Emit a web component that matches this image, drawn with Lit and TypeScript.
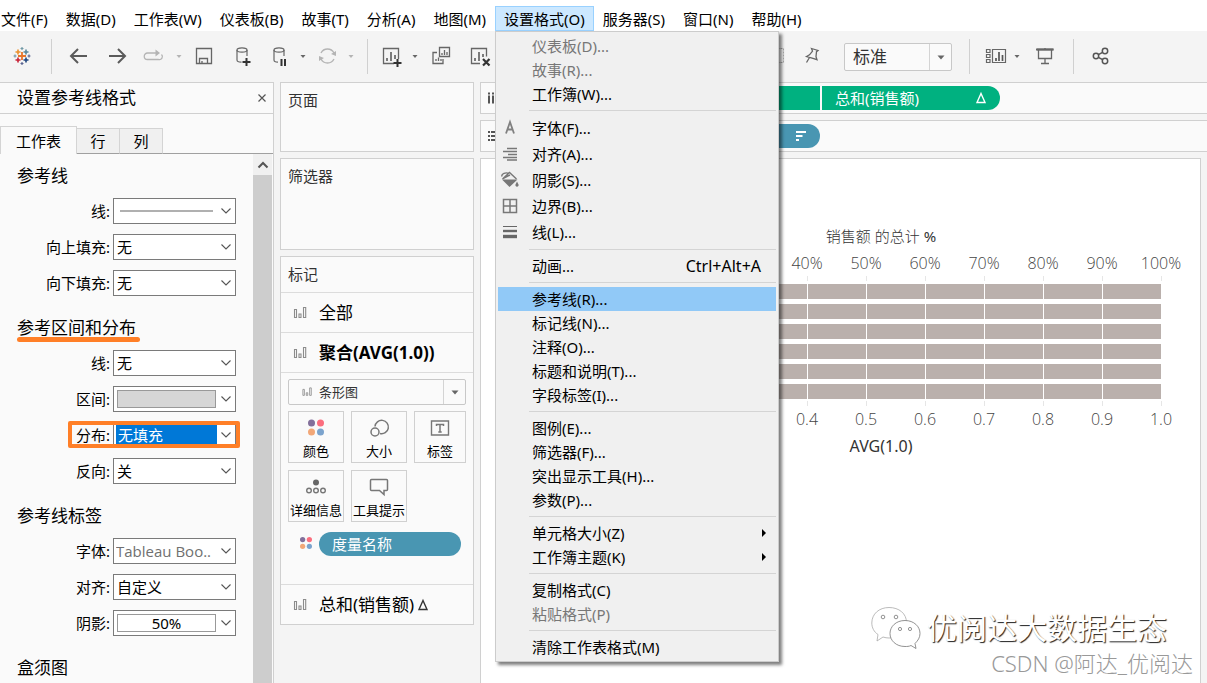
import { LitElement, html, css, svg, nothing } from "lit";
import { customElement, property } from "lit/decorators.js";

const ICONS: Record<string, unknown> = {
  logo: svg`<g fill="none" stroke-width="1.6">
    <path stroke="#e8762c" stroke-width="1.800" d="M12 8v8M8 12h8"/>
    <path stroke="#c72035" d="M8 13.5v5M5.500 16h5"/>
    <path stroke="#59879b" d="M16 5.500v5M13.500 8h5"/>
    <path stroke="#eb912c" d="M8 5.500v5M5.500 8h5"/>
    <path stroke="#1f457e" d="M16 13.500v5M13.500 16h5"/>
    <path stroke="#7199a6" stroke-width="1.200" d="M12 3v3M10.500 4.500h3M3.500 12h3M5 10.500v3"/>
    <path stroke="#5b6591" stroke-width="1.200" d="M17.500 12h3M19 10.500v3M12 18v3M10.500 19.500h3"/></g>`,
  back: svg`<path fill="none" stroke="#5a5a5a" stroke-width="2" d="M20 12H4.500M11 5l-7 7 7 7"/>`,
  forward: svg`<path fill="none" stroke="#5a5a5a" stroke-width="2" d="M4 12h15.500M13 5l7 7-7 7"/>`,
  loop: svg`<g fill="none" stroke="#b4b4b4" stroke-width="1.300"><path d="M17 9H6.500a3 3 0 0 0 0 6.500h11a3 3 0 0 0 3-5"/></g><path fill="#b4b4b4" d="M14.500 5.500l4.500 3.500-4.500 3.500z"/>`,
  save: svg`<g fill="none" stroke="#666" stroke-width="1.300"><path d="M3.500 4.500h15v15h-15z"/><path d="M6.500 19.500v-5h8v5M9 19.500v-2.500"/></g>`,
  dbadd: svg`<g fill="none" stroke="#666" stroke-width="1.200"><ellipse cx="11" cy="6" rx="5" ry="2.200"/><path d="M6 6v10c0 1.500 2 2.200 4.500 2.200M16 6v6"/></g><path stroke="#333" stroke-width="2" d="M15.500 14v8M11.500 18h8"/>`,
  dbpause: svg`<g fill="none" stroke="#666" stroke-width="1.200"><ellipse cx="12" cy="6" rx="5" ry="2.200"/><path d="M7 6v10c0 1.500 1.500 2.200 4 2.200M17 6v6"/></g><path stroke="#333" stroke-width="2" d="M14.500 15v7M18 15v7"/>`,
  refresh: svg`<g fill="none" stroke="#b4b4b4" stroke-width="1.300"><path d="M6 9a7.300 7.300 0 0 1 13 0M19 15a7.300 7.300 0 0 1-13 0"/></g><path fill="#b4b4b4" d="M21 7v5l-5-2zM4 17v-5l5 2z"/>`,
  chartadd: svg`<g fill="none" stroke="#666" stroke-width="1.300"><path d="M15 19.500H4.500v-15h15V15"/></g><path stroke="#666" stroke-width="1.700" d="M8 17v-3M12 17V8M16 15v-4"/><path stroke="#333" stroke-width="2" d="M18.500 15v8M14.500 19h8"/>`,
  dup: svg`<g fill="none" stroke="#666" stroke-width="1.300"><path d="M10.500 3.500h10v9h-10zM8 8.500H4v11h10v-4.500"/></g><path stroke="#666" stroke-width="1.300" d="M13 11V9M15.500 11V6M18 11V8M7 17v-2M9.500 17v-3.500M12 17v-2"/>`,
  chartx: svg`<g fill="none" stroke="#666" stroke-width="1.300"><path d="M13 19.500H4.500v-15h15v8"/></g><path stroke="#666" stroke-width="1.700" d="M8 17v-3M12 17V8M16 13v-3"/><path stroke="#333" stroke-width="2.200" d="M16 15l6.500 6.500M22.500 15L16 21.500"/>`,
  dashed: svg`<path fill="none" stroke="#aaa" stroke-dasharray="2 1" d="M4.500 4.500h15v14h-15z"/>`,
  pin: svg`<path fill="none" stroke="#666" stroke-width="1.300" d="M11.500 4.500l6.500 2-1.500 1.200-.5 5 1 3-4-1.300-3.500-.900-3-1 3-1.700 3-3.700zM9.500 13.500l-3 5"/>`,
  showme: svg`<g fill="none" stroke="#666" stroke-width="1.200"><path d="M11.500 5.500h13v13h-13zM5.500 5.500h3.500v3H5.500zM5.500 10.500h3.500v3H5.500zM5.500 15.500h3.500v3H5.500z"/></g><path stroke="#555" stroke-width="1.700" d="M15 17v-3M18 17V8M21.500 17v-6"/>`,
  present: svg`<g fill="none" stroke="#666" stroke-width="1.300"><path d="M3 5.500h17.500M5.500 5.500v9h13v-9M12 4v1.500M12 14.500v5M8 19.500h8"/></g><path stroke="#666" stroke-width="2.200" d="M3.500 5.500h17"/>`,
  share: svg`<g fill="none" stroke="#555" stroke-width="1.500"><circle cx="7" cy="12" r="2.700"/><circle cx="16" cy="7" r="2.700"/><circle cx="16" cy="17" r="2.700"/><path d="M9.400 10.700l4.200-2.400M9.400 13.300l4.200 2.400"/></g>`,
  bars: svg`<g fill="none" stroke="#8c8c8c" stroke-width="1.100"><path d="M6.500 8.500h2v8h-2zM11 13h2v3.500h-2zM15.500 6.500h2.200v10h-2.200z"/></g>`,
  dots: svg`<circle cx="7.500" cy="6" r="3.500" fill="#83709b"/><circle cx="16.500" cy="6" r="3.500" fill="#fb6e7e"/><circle cx="7.500" cy="15" r="3.500" fill="#f2a778"/><circle cx="16.500" cy="15" r="3.500" fill="#7ba3cd"/>`,
  size: svg`<g fill="none" stroke="#777" stroke-width="1.500"><path d="M8 9.500a6.700 6.700 0 1 1 5 7"/><circle cx="8" cy="15" r="4"/></g>`,
  label: svg`<path fill="none" stroke="#777" stroke-width="1.400" d="M3.500 4h17v14h-17z"/><path fill="none" stroke="#777" stroke-width="1.500" d="M8.500 9V7.500h7V9M12 7.500v7.500M10.300 15h3.400"/>`,
  detail: svg`<circle cx="12" cy="6.500" r="3" fill="#666"/><g fill="none" stroke="#777" stroke-width="1.400"><circle cx="5" cy="14.500" r="2.300"/><circle cx="12" cy="14.500" r="2.300"/><circle cx="19" cy="14.500" r="2.300"/></g>`,
  tooltip: svg`<path fill="none" stroke="#777" stroke-width="1.500" d="M4.500 3.500h15a1 1 0 0 1 1 1v9a1 1 0 0 1-1 1H17v4l-4.500-4h-8a1 1 0 0 1-1-1v-9a1 1 0 0 1 1-1z"/>`,
  delta: svg`<path fill="none" stroke="currentColor" stroke-width="1.400" d="M12 7.500l4 9H8z"/>`,
  sort: svg`<path stroke="#fff" stroke-width="2" d="M7 8h10M7 12h6.500M7 16h3"/>`,
  cols: svg`<path stroke="#555" stroke-width="2" stroke-dasharray="2 1 9 0" d="M8 6.500v11M12 6.500v11M16 6.500v11"/>`,
  rows: svg`<path stroke="#555" stroke-width="2" stroke-dasharray="2 1 9 0" d="M7 8h11M7 12h11M7 16h11"/>`,
  font: svg`<path fill="none" stroke="#808080" stroke-width="1.800" d="M8 17.500l4-11.500 4 11.500M9.500 13.500h5"/>`,
  align: svg`<path stroke="#777" stroke-width="1.400" d="M9 6.500h10M5 9.500h14M10 12.500h9M5 15.500h14M9 18h10"/>`,
  bucket: svg`<path fill="none" stroke="#777" stroke-width="1.400" d="M4.500 11l7-6.500 7 6.500M4 8.500c-1-3 4-4.500 7-3M5 10.500l7-3.500"/><path fill="#777" d="M4 11.500h15.500L11.500 19zM19 13.500l1.500 3a1.600 1.600 0 1 1-3 0z"/>`,
  border: svg`<path fill="none" stroke="#777" stroke-width="1.500" d="M5.500 5.500h13v13h-13zM12 5.500v13M5.500 12h13"/>`,
  lines: svg`<path stroke="#666" d="M5 6.500h14"/><path stroke="#666" stroke-width="2.400" d="M5 11h14"/><path stroke="#666" stroke-width="3.400" d="M5 16.500h14"/>`,
  chevron: svg`<path fill="none" stroke="#555" stroke-width="1.100" d="M7.500 9.500l4.500 4.500 4.500-4.500"/>`,
  up: svg`<path fill="none" stroke="#555" stroke-width="2" d="M7.500 14.500l4.500-4.500 4.500 4.500"/>`,
  caret: svg`<path fill="#666" d="M8.500 10.500h7l-3.500 4z"/>`,
  smallcaret: svg`<path fill="currentColor" d="M9.500 11h5L12 14z"/>`,
  close: svg`<path stroke="#555" stroke-width="1.200" d="M9.500 8.500l7 7M16.500 8.500l-7 7"/>`,
  submenu: svg`<path fill="#000" d="M10 8l4 4-4 4z"/>`,
};

const icon = (name: string, cls = "icon") =>
  html`<svg class=${cls} viewBox="0 0 24 24" aria-hidden="true">${ICONS[name]}</svg>`;

const base = css`
  * { box-sizing: border-box; }
  button, select, input { font: inherit; color: inherit; margin: 0; padding: 0; border: 0; background: none; border-radius: 0; }
  h1, h2, h3, p, ul { margin: 0; padding: 0; font: inherit; list-style: none; }
  .icon { display: block; width: 24px; height: 24px; flex: none; overflow: visible; }
  .small { display: block; width: 18px; height: 18px; flex: none; }
`;

interface Item { t: string; icon?: string; key?: string; off?: boolean; sub?: boolean; hot?: boolean; }

const FORMAT_MENU: Item[][] = [
  [{ t: "仪表板(D)...", off: true }, { t: "故事(R)...", off: true }, { t: "工作簿(W)..." }],
  [
    { t: "字体(F)...", icon: "font" }, { t: "对齐(A)...", icon: "align" }, { t: "阴影(S)...", icon: "bucket" },
    { t: "边界(B)...", icon: "border" }, { t: "线(L)...", icon: "lines" },
  ],
  [{ t: "动画...", key: "Ctrl+Alt+A" }],
  [{ t: "参考线(R)...", hot: true }, { t: "标记线(N)..." }, { t: "注释(O)..." }, { t: "标题和说明(T)..." }, { t: "字段标签(I)..." }],
  [{ t: "图例(E)..." }, { t: "筛选器(F)..." }, { t: "突出显示工具(H)..." }, { t: "参数(P)..." }],
  [{ t: "单元格大小(Z)", sub: true }, { t: "工作簿主题(K)", sub: true }],
  [{ t: "复制格式(C)" }, { t: "粘贴格式(P)", off: true }],
  [{ t: "清除工作表格式(M)" }],
];

@customElement("menu-bar")
class MenuBar extends LitElement {
  static styles = [base, css`
    :host { display: block; background: #fff; }
    .bar { display: flex; height: 31px; padding: 6px 0 0 1px; gap: 18px; }
    .entry { position: relative; }
    .top { display: block; height: 25px; line-height: 26px; white-space: nowrap; }
    .open { margin: 0 -9px; }
    .open > .top { padding: 0 8px; border: 1px solid #99d1ff; line-height: 24px; background: #cce8ff; }
    .menu { position: absolute; z-index: 5; top: 100%; left: 0; width: 284px; padding: 2px; border: 1px solid #ccc; background: #f0f0f0; box-shadow: 3px 3px 3px rgba(0, 0, 0, 0.5); }
    .group + .group { border-top: 1px solid transparent; padding-top: 4px; margin-top: 4px; position: relative; }
    .group + .group::before { content: ""; position: absolute; top: -1px; left: 31px; right: 0; height: 1px; background: #d4d4d4; }
    .item { display: flex; align-items: center; width: 100%; height: 24px; text-align: left; white-space: nowrap; }
    .tall .item { height: 26px; }
    .slot { width: 24px; margin-right: 10px; flex: none; }
    .text { flex: 1; }
    .key { padding-right: 15px; font-size: 16px; }
    .off { color: #777; }
    .hot { background: #91c9f7; }
  `];

  private menu() {
    return html`<div class="menu" role="menu">
      ${FORMAT_MENU.map((g) => html`<div class="group ${g[0].icon ? "tall" : ""}">
        ${g.map((i) => html`<button role="menuitem" class="item ${i.off ? "off" : ""} ${i.hot ? "hot" : ""}" ?disabled=${i.off}>
          <span class="slot">${i.icon ? icon(i.icon) : nothing}</span><span class="text">${i.t}</span>
          ${i.key ? html`<span class="key">${i.key}</span>` : nothing}
          ${i.sub ? icon("submenu") : nothing}
        </button>`)}
      </div>`)}
    </div>`;
  }

  render() {
    const tops = ["文件(F)", "数据(D)", "工作表(W)", "仪表板(B)", "故事(T)", "分析(A)", "地图(M)", "设置格式(O)", "服务器(S)", "窗口(N)", "帮助(H)"];
    return html`<nav class="bar">${tops.map((t) => t === "设置格式(O)"
      ? html`<div class="entry open"><button class="top">${t}</button>${this.menu()}</div>`
      : html`<div class="entry"><button class="top">${t}</button></div>`)}</nav>`;
  }
}

@customElement("tool-bar")
class ToolBar extends LitElement {
  static styles = [base, css`
    :host { display: block; background: #f4f4f4; overflow: hidden; }
    .bar { display: flex; align-items: center; height: 51px; padding-bottom: 1px; }
    .tool { display: flex; justify-content: center; align-items: center; flex: none; height: 32px; width: 36px; }
    .home { width: 43px; }
    .wide { width: 40px; }
    .slim { width: 32px; }
    .caret { width: 16px; color: #666; }
    .pale { color: #b4b4b4; }
    .sep { flex: none; width: 1px; height: 35px; margin: 0 7px 0 8px; background: #d0d0d0; }
    .covered { flex: none; width: 261px; }
    .fit { position: relative; flex: none; width: 108px; height: 28px; margin: 1px 9px 0 12px; border: 1px solid #c8c8c8; border-radius: 2px; background: #fafafa; }
    .fit select { width: 100%; height: 100%; padding-left: 8px; appearance: none; font-size: 17px; color: #333; }
    .arrow { position: absolute; top: 0; right: 0; width: 22px; height: 100%; border-left: 1px solid #d4d4d4; pointer-events: none; display: flex; align-items: center; justify-content: center; }
  `];

  private tool(name: string, cls: string, label: string) {
    return html`<button class="tool ${cls}" aria-label=${label}>${icon(name)}</button>`;
  }

  render() {
    const more = (cls = "") => this.tool("smallcaret", "caret " + cls, "更多");
    return html`<div class="bar">
      ${this.tool("logo", "home", "开始")}<span class="sep"></span>
      ${this.tool("back", "wide", "撤消")}${this.tool("forward", "", "重做")}${this.tool("loop", "", "重播")}${more("pale")}
      ${this.tool("save", "", "保存")}${this.tool("dbadd", "wide", "新建数据源")}${this.tool("dbpause", "slim", "暂停自动更新")}${more()}
      ${this.tool("refresh", "slim", "运行更新")}${more("pale")}<span class="sep"></span>
      ${this.tool("chartadd", "slim", "新建工作表")}${more()}${this.tool("dup", "", "复制")}${this.tool("chartx", "wide", "清除")}
      <span class="covered"></span>
      ${this.tool("dashed", "slim", "标签")}${this.tool("pin", "wide", "固定")}
      <span class="fit"><select aria-label="适合"><option>标准</option></select><span class="arrow">${icon("caret")}</span></span>
      <span class="sep"></span>
      ${this.tool("showme", "slim", "智能推荐")}${more()}${this.tool("present", "wide", "演示模式")}<span class="sep"></span>
      ${this.tool("share", "wide", "共享")}
    </div>`;
  }
}

interface Field { label: string; value: string; kind?: string; mark?: boolean; }
const SECTIONS: { title: string; under?: boolean; fields: Field[] }[] = [
  { title: "参考线", fields: [
    { label: "线:", value: "", kind: "stroke" }, { label: "向上填充:", value: "无" }, { label: "向下填充:", value: "无" }] },
  { title: "参考区间和分布", under: true, fields: [
    { label: "线:", value: "无" }, { label: "区间:", value: "", kind: "swatch" },
    { label: "分布:", value: "无填充", kind: "picked", mark: true }, { label: "反向:", value: "关" }] },
  { title: "参考线标签", fields: [
    { label: "字体:", value: "Tableau Boo..", kind: "faint" }, { label: "对齐:", value: "自定义" }, { label: "阴影:", value: "50%", kind: "boxed" }] },
  { title: "盒须图", fields: [] },
];

@customElement("format-pane")
class FormatPane extends LitElement {
  static styles = [base, css`
    :host { display: flex; flex-direction: column; min-height: 0; border: 1px solid #d0d0d0; border-width: 1px 1px 0 0; background: #fafafa; overflow: hidden; }
    .head { display: flex; align-items: center; justify-content: space-between; flex: none; height: 31px; padding-left: 17px; border-bottom: 1px solid #d0d0d0; font-size: 17px; line-height: 30px; }
    .tabs { display: flex; align-items: flex-end; flex: none; height: 40px; font-size: 15px; }
    .tab { width: 43px; height: 26px; border: 1px solid #d4d4d4; border-width: 1px 1px 1px 0; border-bottom-color: #a0a0a0; background: #f0f0f0; }
    .on { width: 77px; height: 28px; border-width: 1px 1px 0; background: #fafafa; }
    .rest { flex: 1; border-bottom: 1px solid #a0a0a0; }
    .body { display: flex; flex: 1; min-height: 0; }
    .form { flex: 1; min-width: 0; overflow: hidden; }
    .title { display: flex; height: 44px; padding: 10px 0 0 17px; line-height: 34px; font-size: 17px; }
    .first .title { height: 39px; padding-top: 5px; }
    .under { position: relative; }
    .under::after { content: ""; position: absolute; left: 0; top: 26px; width: 123px; height: 5px; border-radius: 3px; background: #ff7f27; }
    .row { display: flex; justify-content: flex-end; height: 36px; padding: 5px 17px 5px 0; }
    .pair { display: flex; align-items: center; gap: 3px; position: relative; }
    .mark::after { content: ""; position: absolute; top: -1px; bottom: 0; left: -8px; right: -4px; border: 4px solid #ff7f27; border-radius: 2px; pointer-events: none; }
    .box { position: relative; display: block; width: 123px; height: 26px; border: 1px solid #7a7a7a; background: #fff; }
    .box select { appearance: none; display: block; width: 100%; height: 100%; padding: 0 20px 0 3px; outline: 0; }
    .faint select { color: #707070; font-family: "Open Sans", sans-serif; padding-left: 2px; padding-right: 0; }
    .picked select { width: 101px; margin-left: 2px; padding: 0 0 0 2px; background: #0078d7; color: #fff; }
    .boxed select { width: 99px; height: 18px; margin: 3px; padding: 0; border: 1px solid #999; text-align: center; text-align-last: center; line-height: 16px; }
    .chev { position: absolute; top: 0; right: -3px; pointer-events: none; }
    .stroke { position: absolute; left: 6px; top: 11px; width: 93px; height: 2px; background: #b0b0b0; pointer-events: none; }
    .swatch { position: absolute; left: 3px; top: 3px; width: 99px; height: 18px; border: 1px solid #999; background: #d6d6d6; pointer-events: none; }
    .scroll { display: flex; flex-direction: column; flex: none; width: 20px; padding-right: 1px; }
    .up { display: flex; justify-content: center; align-items: center; height: 21px; background: #f0f0f0; }
    .thumb { flex: 1; background: #cdcdcd; }
  `];

  private field(f: Field, id: string) {
    const drawn = f.kind === "stroke" || f.kind === "swatch";
    return html`<div class="row"><div class="pair ${f.mark ? "mark" : ""}">
      <label for=${id}>${f.label}</label>
      <span class="box ${f.kind && !drawn ? f.kind : ""}">
        <select id=${id}><option>${f.value}</option></select>
        ${drawn ? html`<span class=${f.kind!}></span>` : nothing}
        ${icon("chevron", "icon chev")}
      </span></div></div>`;
  }

  render() {
    return html`
      <div class="head"><h2>设置参考线格式</h2><button aria-label="关闭">${icon("close")}</button></div>
      <div class="tabs" role="tablist"><button role="tab" class="tab on">工作表</button><button role="tab" class="tab">行</button><button role="tab" class="tab">列</button><span class="rest"></span></div>
      <div class="body">
        <div class="form">${SECTIONS.map((s, i) => html`<section class=${i === 0 ? "first" : ""}>
          <div class="title"><h3 class=${s.under ? "under" : ""}>${s.title}</h3></div>
          ${s.fields.map((f, j) => this.field(f, `f${i}-${j}`))}
        </section>`)}</div>
        <div class="scroll"><button class="up" aria-label="向上滚动">${icon("up")}</button><div class="thumb"></div></div>
      </div>`;
  }
}

@customElement("card-column")
class CardColumn extends LitElement {
  static styles = [base, css`
    :host { display: flex; flex-direction: column; gap: 6px; padding: 0 6px; background: #f4f4f4; }
    .card { border: 1px solid #d0d0d0; background: #fafafa; color: #333; }
    .name { height: 35px; padding-left: 7px; line-height: 34px; }
    .pages { height: 70px; }
    .filters { height: 92px; }
    .layer { display: flex; align-items: center; width: 100%; height: 40px; padding-left: 7px; gap: 7px; border-top: 1px solid #dcdcdc; font-size: 17px; color: #000; }
    .bold { font-weight: 700; }
    .inner { padding: 6px 7px 0; border-top: 1px solid #dcdcdc; height: 212px; }
    .type { position: relative; height: 26px; border: 1px solid #c8c8c8; border-radius: 2px; margin-bottom: 6px; }
    .type select { appearance: none; width: 100%; height: 100%; padding-left: 30px; font-size: 13px; }
    .lead { position: absolute; left: 9px; top: 3px; pointer-events: none; }
    .arrow { position: absolute; top: 0; right: 0; width: 22px; height: 100%; border-left: 1px solid #d4d4d4; display: flex; align-items: center; justify-content: center; pointer-events: none; }
    .grid { display: grid; grid-template-columns: 56fr 56fr 52fr; gap: 7px; }
    .prop { display: flex; flex-direction: column; align-items: center; height: 52px; padding-top: 5px; border: 1px solid #d0d0d0; font-size: 13px; line-height: 20px; white-space: nowrap; color: #000; }
    .chip { display: flex; align-items: center; gap: 4px; padding: 10px 5px 0 9px; }
    .pill { flex: 1; height: 24px; padding-left: 13px; border-radius: 12px; background: #4996b2; color: #fff; line-height: 23px; text-align: left; }
    .dlt { margin-left: -10px; color: #333; }
  `];

  render() {
    const props = [["dots", "颜色"], ["size", "大小"], ["label", "标签"], ["detail", "详细信息"], ["tooltip", "工具提示"]];
    return html`
      <section class="card pages"><h2 class="name">页面</h2></section>
      <section class="card filters"><h2 class="name">筛选器</h2></section>
      <section class="card">
        <h2 class="name">标记</h2>
        <button class="layer">${icon("bars")}全部</button>
        <button class="layer bold">${icon("bars")}聚合(AVG(1.0))</button>
        <div class="inner">
          <div class="type"><select aria-label="标记类型"><option>条形图</option></select>${icon("bars", "small lead")}<span class="arrow">${icon("caret")}</span></div>
          <div class="grid">${props.map(([i, t]) => html`<button class="prop">${icon(i)}<span>${t}</span></button>`)}</div>
          <div class="chip">${icon("dots", "small")}<button class="pill">度量名称</button></div>
        </div>
        <button class="layer">${icon("bars")}总和(销售额)${icon("delta", "icon dlt")}</button>
      </section>`;
  }
}

@customElement("field-shelf")
class FieldShelf extends LitElement {
  @property() kind = "cols";
  static styles = [base, css`
    :host { display: flex; align-items: center; height: 32px; border: 1px solid #d0d0d0; border-right: 0; background: #fafafa; }
    .name { display: flex; align-items: center; width: 161px; }
    .pills { display: flex; gap: 2px; }
    .pill { display: flex; align-items: center; justify-content: space-between; width: 178px; height: 24px; padding: 0 7px 0 13px; color: #fff; background: #00b180; white-space: nowrap; }
    .start { border-radius: 12px 0 0 12px; }
    .end { border-radius: 0 12px 12px 0; }
    .blue { border-radius: 12px; background: #4996b2; justify-content: flex-end; }
  `];
  render() {
    return this.kind === "cols"
      ? html`<span class="name">${icon("cols")}</span><div class="pills"><button class="pill start" aria-label="聚合"></button><button class="pill end">总和(销售额)${icon("delta")}</button></div>`
      : html`<span class="name">${icon("rows")}</span><div class="pills"><button class="pill blue" aria-label="排序">${icon("sort")}</button></div>`;
  }
}

@customElement("bar-view")
class BarView extends LitElement {
  static styles = [base, css`
    :host { display: block; position: relative; flex: 1; min-height: 0; margin-right: 6px; padding: 63px 9px 0 90px; border: 1px solid #d0d0d0; border-bottom: 0; background: #fff; }
    .caption { text-align: center; line-height: 28px; color: #333; }
    .large { font-size: 16px; }
    .light { font-weight: 300; }
    .plot { padding-right: 30px; }
    .axis { display: grid; grid-template-columns: repeat(11, 1fr); margin: 0 -5%; font: 300 16px/26px "Open Sans", "Noto Sans", sans-serif; color: #444; text-align: center; min-height: 26px; }
    .ticks { min-height: 0; }
    .ticks span { justify-self: center; width: 1px; height: 5px; background: #e6e6e6; }
    .rows { display: grid; gap: 5px; margin: 3px 0 2px; }
    .bar { display: grid; grid-template-columns: repeat(10, 1fr); height: 15px; background: #bab0ac; }
    .bar span { border-left: 1px solid #fff; }
    .brand { position: absolute; right: 33px; bottom: 33px; display: flex; align-items: center; gap: 6px; color: #fff; font-size: 30px; line-height: 44px; text-shadow: 1px 1px 1px #222; }
    .chat { width: 50px; height: 44px; }
    .credit { position: absolute; right: 7px; bottom: 5px; font-size: 22px; line-height: 30px; color: #999; font-weight: 300; }
  `];

  render() {
    const n = Array.from({ length: 11 }, (_, i) => i);
    const firstLabel = 4;
    const ticks = html`<div class="axis ticks">${n.map(() => html`<span></span>`)}</div>`;
    return html`
      <h2 class="caption"><span class="light">销售额 的总计</span> %</h2>
      <div class="plot">
        <div class="axis">${n.map((i) => html`<span>${i < firstLabel ? "" : `${i * 10}%`}</span>`)}</div>
        ${ticks}
        <div class="rows">${n.slice(0, 6).map(() => html`<div class="bar">${n.slice(0, 10).map(() => html`<span></span>`)}</div>`)}</div>
        ${ticks}
        <div class="axis">${n.map((i) => html`<span>${i < firstLabel ? "" : (i / 10).toFixed(1)}</span>`)}</div>
      </div>
      <p class="caption large">AVG(1.0)</p>
      <div class="brand">
        <svg class="chat" viewBox="0 0 50 44" aria-hidden="true">
          <g fill="#fff" stroke="#777" stroke-width=".8">
            <path stroke="#aaa" d="M18 1.500c10 0 17.500 6 17.500 15S28 32 18 32c-2 0-4-.300-6-1l-6 4 1-6.500C3 26 .800 21.500.800 17 .800 8 8 1.500 18 1.500z"/>
            <path d="M34 14.500c9 0 15 6 15 13 0 4-2 7-5 10l1 5-5-3c-2 1-4 1-6 1-9 0-15-6-15-13s6-13 15-13z"/>
            <circle cx="12" cy="11" r="1.800"/><circle cx="25" cy="11" r="1.800"/><circle cx="29" cy="23" r="1.600"/><circle cx="39" cy="23" r="1.600"/>
          </g>
        </svg>优阅达大数据生态</div>
      <div class="credit">CSDN @阿达_优阅达</div>`;
  }
}

@customElement("app-root")
class AppRoot extends LitElement {
  static styles = [base, css`
    :host { display: flex; flex-direction: column; height: 100vh; overflow: hidden; background: #f4f4f4; color: #000; font: 15px/20px "Noto Sans", "Noto Sans CJK SC", sans-serif; }
    menu-bar { position: relative; z-index: 2; }
    .main { display: grid; grid-template-columns: 274px 206px minmax(0, 1fr); flex: 1; min-height: 0; }
    .sheet { display: flex; flex-direction: column; gap: 6px; min-height: 0; }
  `];
  render() {
    return html`<menu-bar></menu-bar><tool-bar></tool-bar>
      <main class="main">
        <format-pane></format-pane><card-column></card-column>
        <div class="sheet"><field-shelf kind="cols"></field-shelf><field-shelf kind="rows"></field-shelf><bar-view></bar-view></div>
      </main>`;
  }
}
